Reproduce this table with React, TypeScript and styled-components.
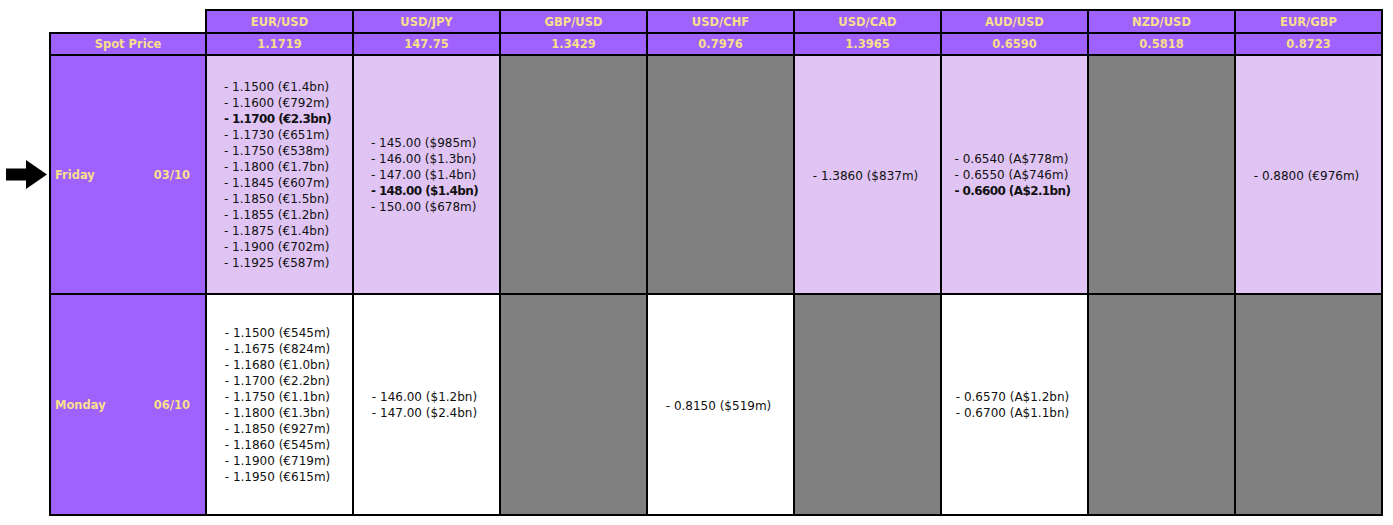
import styled, { createGlobalStyle } from "styled-components";

const purple = "#a062ff";
const gold = "#f7df8c";
const lilac = "#dfc4f4";
const slate = "#808080";

type Tone = "light" | "white" | "empty";

type Cell = { lines: string[]; bold?: number } | null;

type Day = { name: string; date: string; tone: Tone; current?: boolean; cells: Cell[] };

const pairs = [
  { pair: "EUR/USD", spot: "1.1719" },
  { pair: "USD/JPY", spot: "147.75" },
  { pair: "GBP/USD", spot: "1.3429" },
  { pair: "USD/CHF", spot: "0.7976" },
  { pair: "USD/CAD", spot: "1.3965" },
  { pair: "AUD/USD", spot: "0.6590" },
  { pair: "NZD/USD", spot: "0.5818" },
  { pair: "EUR/GBP", spot: "0.8723" },
];

const days: Day[] = [
  {
    name: "Friday",
    date: "03/10",
    tone: "light",
    current: true,
    cells: [
      {
        lines: [
          "1.1500 (€1.4bn)",
          "1.1600 (€792m)",
          "1.1700 (€2.3bn)",
          "1.1730 (€651m)",
          "1.1750 (€538m)",
          "1.1800 (€1.7bn)",
          "1.1845 (€607m)",
          "1.1850 (€1.5bn)",
          "1.1855 (€1.2bn)",
          "1.1875 (€1.4bn)",
          "1.1900 (€702m)",
          "1.1925 (€587m)",
        ],
        bold: 2,
      },
      {
        lines: ["145.00 ($985m)", "146.00 ($1.3bn)", "147.00 ($1.4bn)", "148.00 ($1.4bn)", "150.00 ($678m)"],
        bold: 3,
      },
      null,
      null,
      { lines: ["1.3860 ($837m)"] },
      { lines: ["0.6540 (A$778m)", "0.6550 (A$746m)", "0.6600 (A$2.1bn)"], bold: 2 },
      null,
      { lines: ["0.8800 (€976m)"] },
    ],
  },
  {
    name: "Monday",
    date: "06/10",
    tone: "white",
    cells: [
      {
        lines: [
          "1.1500 (€545m)",
          "1.1675 (€824m)",
          "1.1680 (€1.0bn)",
          "1.1700 (€2.2bn)",
          "1.1750 (€1.1bn)",
          "1.1800 (€1.3bn)",
          "1.1850 (€927m)",
          "1.1860 (€545m)",
          "1.1900 (€719m)",
          "1.1950 (€615m)",
        ],
      },
      { lines: ["146.00 ($1.2bn)", "147.00 ($2.4bn)"] },
      null,
      { lines: ["0.8150 ($519m)"] },
      null,
      { lines: ["0.6570 (A$1.2bn)", "0.6700 (A$1.1bn)"] },
      null,
      null,
    ],
  },
];

const GlobalStyle = createGlobalStyle`
  html, body {
    margin: 0;
    padding: 0;
    background: #ffffff;
  }
  body {
    font-family: "DejaVu Sans", "Liberation Sans", sans-serif;
  }
`;

const Page = styled.div`
  padding-top: 9px;
`;

const Grid = styled.table`
  border-collapse: collapse;
  table-layout: fixed;
  width: 1383px;
`;

const Row = styled.tr<{ $h: number }>`
  height: ${(p) => p.$h}px;
`;

const Blank = styled.td`
  padding: 0;
  border: none;
`;

const MarkerCell = styled.td`
  padding: 0 2px 0 0;
  border: none;
  text-align: right;
  vertical-align: middle;
  line-height: 0;
`;

const HeadCell = styled.td`
  background: ${purple};
  color: ${gold};
  border: 2px solid #000;
  font-size: 11.5px;
  font-weight: bold;
  text-align: center;
  padding: 0;
`;

const DayCell = styled.td`
  background: ${purple};
  color: ${gold};
  border: 2px solid #000;
  font-size: 11.5px;
  font-weight: bold;
  padding: 0 15px 0 4px;
`;

const DayLabel = styled.div`
  display: flex;
  justify-content: space-between;
  align-items: center;
`;

const RateCell = styled.td<{ $tone: Tone }>`
  background: ${(p) => (p.$tone === "light" ? lilac : p.$tone === "white" ? "#ffffff" : slate)};
  border: 2px solid #000;
  text-align: center;
  vertical-align: middle;
  padding: 0;
`;

const Levels = styled.ul`
  display: inline-block;
  list-style: none;
  margin: 0 4px 0 0;
  padding: 0;
  text-align: left;
  font-size: 12px;
  line-height: 16px;
  color: #111;
`;

const Level = styled.li<{ $strong?: boolean }>`
  font-weight: ${(p) => (p.$strong ? "bold" : "normal")};
  letter-spacing: ${(p) => (p.$strong ? "-0.6px" : "0")};
  white-space: nowrap;
`;

const Arrow = () => (
  <svg width="41" height="29" viewBox="0 0 41 29">
    <rect x="0" y="8.5" width="22" height="12" fill="#000" />
    <polygon points="20,0 41,14.5 20,29" fill="#000" />
  </svg>
);

export default function App() {
  return (
    <Page>
      <GlobalStyle />
      <Grid>
        <colgroup>
          <col style={{ width: 50 }} />
          <col style={{ width: 156 }} />
          {pairs.map((p) => (
            <col key={p.pair} style={{ width: 147 }} />
          ))}
        </colgroup>
        <tbody>
          <Row $h={23}>
            <Blank />
            <Blank />
            {pairs.map((p) => (
              <HeadCell key={p.pair}>{p.pair}</HeadCell>
            ))}
          </Row>
          <Row $h={22}>
            <Blank />
            <HeadCell>Spot Price</HeadCell>
            {pairs.map((p) => (
              <HeadCell key={p.pair}>{p.spot}</HeadCell>
            ))}
          </Row>
          {days.map((d) => (
            <Row key={d.name} $h={d.current ? 239 : 221}>
              <MarkerCell>{d.current && <Arrow />}</MarkerCell>
              <DayCell>
                <DayLabel>
                  <span>{d.name}</span>
                  <span>{d.date}</span>
                </DayLabel>
              </DayCell>
              {d.cells.map((c, i) => (
                <RateCell key={i} $tone={c ? d.tone : "empty"}>
                  {c && (
                    <Levels>
                      {c.lines.map((l, j) => (
                        <Level key={l} $strong={c.bold === j}>
                          - {l}
                        </Level>
                      ))}
                    </Levels>
                  )}
                </RateCell>
              ))}
            </Row>
          ))}
        </tbody>
      </Grid>
    </Page>
  );
}
